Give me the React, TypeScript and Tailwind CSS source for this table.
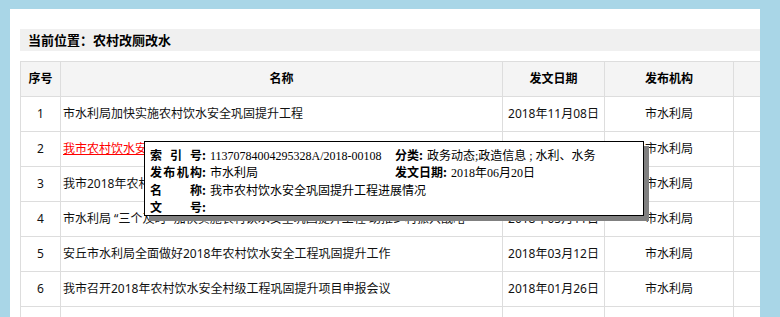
const rows = [
  { no: 1, title: '市水利局加快实施农村饮水安全巩固提升工程', date: '2018年11月08日', org: '市水利局' },
  { no: 2, title: '我市农村饮水安全巩固提升工程进展情况', date: '2018年06月20日', org: '市水利局', active: true },
  { no: 3, title: '我市2018年农村饮水安全巩固提升工程全面开工建设', date: '2018年05月28日', org: '市水利局' },
  { no: 4, title: '市水利局 “三个及时” 加快实施农村饮水安全巩固提升工程 助推乡村振兴战略', date: '2018年05月11日', org: '市水利局' },
  { no: 5, title: '安丘市水利局全面做好2018年农村饮水安全工程巩固提升工作', date: '2018年03月12日', org: '市水利局' },
  { no: 6, title: '我市召开2018年农村饮水安全村级工程巩固提升项目申报会议', date: '2018年01月26日', org: '市水利局' },
  { no: 7, title: '我市农村饮水安全工程建设管理工作会议召开', date: '2017年12月15日', org: '市水利局' },
];

const font = "font-['Noto_Sans','Noto_Sans_CJK_SC',sans-serif]";

// four-character wide label, characters spread out
function Label({ text }: { text: string }) {
  return (
    <b className="inline-flex items-baseline">
      <span className="inline-flex w-[52px] justify-between">
        {text.split('').map((c, i) => <span key={i}>{c}</span>)}
      </span>
      <span>:</span>
    </b>
  );
}

function InfoTip() {
  const val = "font-['Liberation_Serif','Noto_Sans_CJK_SC',serif] ml-[4px]";
  return (
    <div className="absolute left-[134px] top-[132px] w-[500px] h-[75px] border border-black bg-white shadow-[5px_5px_0_#808080] px-[5px] pt-[5px] text-[12px] leading-[15.4px] text-black font-['Noto_Sans_CJK_SC',sans-serif]">
      <div className="flex whitespace-nowrap">
        <div className="w-[245px]"><Label text="索引号" /><span className={val}>11370784004295328A/2018-00108</span></div>
        <div><b>分类:</b><span className={val}>政务动态;政造信息 ; 水利、水务</span></div>
      </div>
      <div className="flex whitespace-nowrap">
        <div className="w-[245px]"><Label text="发布机构" /><span className={val}>市水利局</span></div>
        <div><b>发文日期:</b><span className={val}>2018年06月20日</span></div>
      </div>
      <div className="whitespace-nowrap"><Label text="名称" /><span className={val}>我市农村饮水安全巩固提升工程进展情况</span></div>
      <div className="whitespace-nowrap"><Label text="文号" /></div>
    </div>
  );
}

export default function App() {
  return (
    <div className={`w-[780px] h-[317px] overflow-hidden bg-[#a9d6e7] pl-[10px] pr-[20px] pt-[9px] ${font}`}>
      <div className="relative h-[308px] bg-white overflow-hidden pl-[10px] pt-[20px]">
        {/* breadcrumb */}
        <div className="h-[22px] bg-[#f0f0f0] pl-[8px] text-[13px] font-bold leading-[22px] text-black">
          当前位置：农村改厕改水
        </div>

        <table className="mt-[10px] table-fixed w-[813px] border-collapse text-[12px] leading-[16px] text-[#111]">
          <colgroup>
            <col className="w-[40px]" />
            <col className="w-[442px]" />
            <col className="w-[102px]" />
            <col className="w-[129px]" />
            <col className="w-[100px]" />
          </colgroup>
          <thead>
            <tr className="h-[35px] bg-[#f4f4f4] text-black">
              <th className="border border-[#dddddd] font-bold">序号</th>
              <th className="border border-[#dddddd] font-bold">名称</th>
              <th className="border border-[#dddddd] font-bold">发文日期</th>
              <th className="border border-[#dddddd] font-bold">发布机构</th>
              <th className="border border-[#dddddd]"></th>
            </tr>
          </thead>
          <tbody>
            {rows.map(r => (
              <tr key={r.no} className="h-[35px]">
                <td className="border border-[#dddddd] text-center">{r.no}</td>
                <td className="border border-[#dddddd] pl-[2px] whitespace-nowrap overflow-hidden">
                  <span className={r.active ? 'text-[#ff0000] underline' : ''}>{r.title}</span>
                </td>
                <td className="border border-[#dddddd] text-center whitespace-nowrap">{r.date}</td>
                <td className="border border-[#dddddd] text-center">{r.org}</td>
                <td className="border border-[#dddddd]"></td>
              </tr>
            ))}
          </tbody>
        </table>

        <InfoTip />
      </div>
    </div>
  );
}
